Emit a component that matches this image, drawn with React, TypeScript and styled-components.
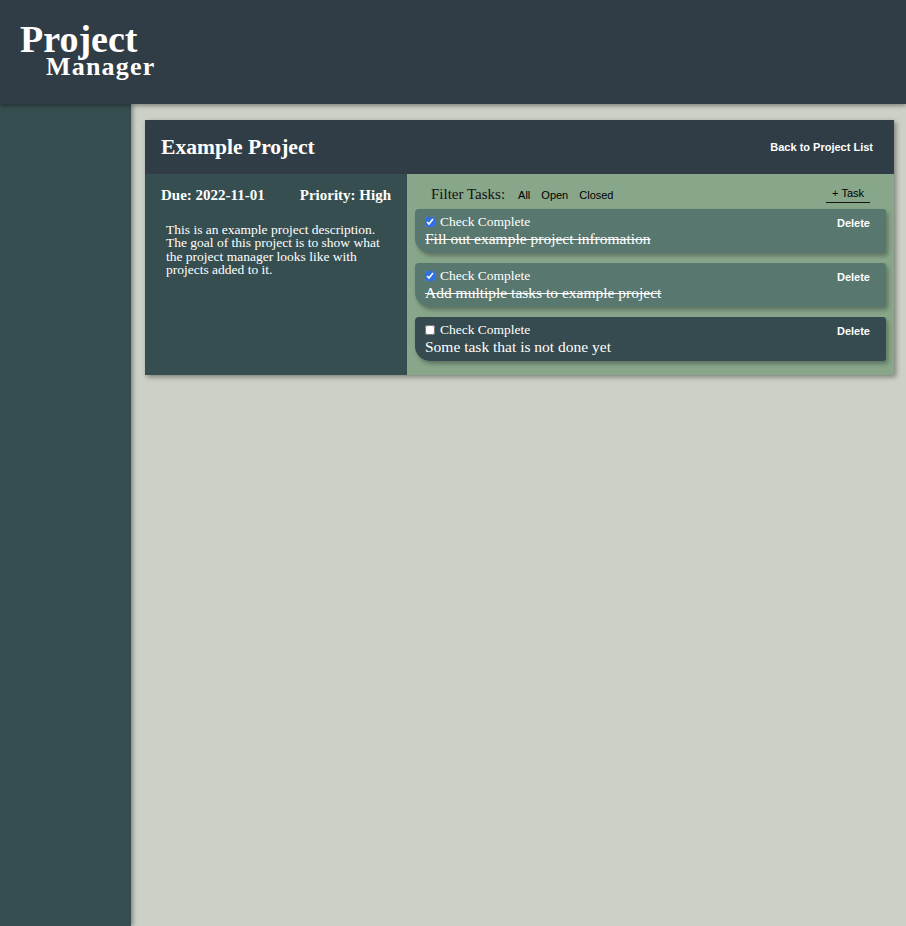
import React, { useState } from "react";
import styled, { createGlobalStyle } from "styled-components";

const GlobalStyle = createGlobalStyle`
  html, body {
    margin: 0;
    padding: 0;
    background: #cbd1c6;
  }
  * {
    box-sizing: border-box;
  }
`;

const serif = `"Liberation Serif", "Times New Roman", serif`;
const sans = `"Liberation Sans", Arial, sans-serif`;

const Layout = styled.div`
  display: grid;
  grid-template-columns: 131px 1fr;
  grid-template-rows: 104px 1fr;
  height: 926px;
  background: #cbd1c6;
`;

const Header = styled.header`
  grid-column: 1 / 3;
  background: #313d46;
  box-shadow: 0 2px 4px rgba(0, 0, 0, 0.35);
  position: relative;
  z-index: 2;
  padding: 21px 0 0 20px;
  color: #fff;
  font-family: ${serif};
`;

const LogoTop = styled.div`
  font-size: 38px;
  font-weight: bold;
  line-height: 36px;
`;

const LogoBottom = styled.div`
  font-size: 26px;
  font-weight: bold;
  letter-spacing: 1.2px;
  line-height: 20px;
  margin-left: 26px;
`;

const Sidebar = styled.aside`
  background: #374e50;
  box-shadow: 2px 0 4px rgba(0, 0, 0, 0.35);
  position: relative;
  z-index: 1;
`;

const Main = styled.main`
  padding: 16px 12px 0 14px;
`;

const Card = styled.section`
  box-shadow: 2px 2px 5px rgba(0, 0, 0, 0.4);
`;

const CardHeader = styled.div`
  height: 54px;
  background: #313d46;
  display: flex;
  align-items: center;
  justify-content: space-between;
  padding: 0 21px 0 16px;
`;

const Title = styled.h1`
  margin: 0;
  color: #fff;
  font-family: ${serif};
  font-size: 21.6px;
  font-weight: bold;
`;

const LinkButton = styled.button`
  background: none;
  border: none;
  padding: 0;
  color: #fff;
  font-family: ${sans};
  font-size: 11px;
  font-weight: bold;
  cursor: pointer;
`;

const Body = styled.div`
  display: grid;
  grid-template-columns: 262px 1fr;
`;

const InfoPanel = styled.div`
  background: #374e50;
  padding: 13px 16px 16px;
  color: #fff;
  font-family: ${serif};
`;

const MetaRow = styled.div`
  display: flex;
  justify-content: space-between;
  font-size: 15px;
  font-weight: bold;
`;

const Description = styled.p`
  margin: 19px 0 0 5px;
  width: 224px;
  font-size: 13.5px;
  line-height: 13.3px;
`;

const TaskPanel = styled.div`
  background: #88a68a;
  padding: 12px 8px 14px;
  display: flex;
  flex-direction: column;
  gap: 10px;
`;

const FilterRow = styled.div`
  display: flex;
  align-items: center;
  padding: 0 16px;
  margin-bottom: -4px;
`;

const FilterLabel = styled.span`
  font-family: ${serif};
  font-size: 15px;
  color: #111;
  margin-right: 13px;
`;

const FilterButton = styled.button`
  background: none;
  border: none;
  padding: 0;
  margin-right: 11px;
  font-family: ${sans};
  font-size: 11px;
  color: #000;
  cursor: pointer;
`;

const AddButton = styled.button`
  margin-left: auto;
  background: none;
  border: none;
  border-bottom: 1px solid #111;
  padding: 0 6px 3px;
  font-family: ${sans};
  font-size: 11px;
  color: #000;
  cursor: pointer;
`;

const TaskCard = styled.div<{ $done: boolean }>`
  background: ${(p) => (p.$done ? "#57776f" : "#364b4f")};
  border-radius: 4px 3px 3px 15px;
  box-shadow: 2px 3px 4px rgba(0, 0, 0, 0.3);
  padding: 5px 16px 5px 10px;
  color: #fff;
  font-family: ${serif};
`;

const TaskTop = styled.div`
  display: flex;
  align-items: center;
  justify-content: space-between;
  height: 15px;
`;

const CheckLabel = styled.label`
  display: flex;
  align-items: center;
  font-size: 13.5px;
`;

const Check = styled.input`
  width: 10px;
  height: 10px;
  margin: 0 5px 0 0;
  accent-color: #2f6fe4;
`;

const DeleteButton = styled(LinkButton)`
  margin-top: 3px;
`;

const TaskText = styled.div<{ $done: boolean }>`
  font-size: 15.5px;
  line-height: 19px;
  text-decoration: ${(p) => (p.$done ? "line-through" : "none")};
`;

const initialTasks = [
  { id: 1, text: "Fill out example project infromation", done: true },
  { id: 2, text: "Add multiple tasks to example project", done: true },
  { id: 3, text: "Some task that is not done yet", done: false },
];

export default function App() {
  const [tasks, setTasks] = useState(initialTasks);

  const toggle = (id: number) =>
    setTasks((t) => t.map((x) => (x.id === id ? { ...x, done: !x.done } : x)));

  return (
    <>
      <GlobalStyle />
      <Layout>
        <Header>
          <LogoTop>Project</LogoTop>
          <LogoBottom>Manager</LogoBottom>
        </Header>
        <Sidebar />
        <Main>
          <Card>
            <CardHeader>
              <Title>Example Project</Title>
              <LinkButton>Back to Project List</LinkButton>
            </CardHeader>
            <Body>
              <InfoPanel>
                <MetaRow>
                  <span>Due: 2022-11-01</span>
                  <span>Priority: High</span>
                </MetaRow>
                <Description>
                  This is an example project description. The goal of this
                  project is to show what the project manager looks like with
                  projects added to it.
                </Description>
              </InfoPanel>
              <TaskPanel>
                <FilterRow>
                  <FilterLabel>Filter Tasks:</FilterLabel>
                  <FilterButton>All</FilterButton>
                  <FilterButton>Open</FilterButton>
                  <FilterButton>Closed</FilterButton>
                  <AddButton>+ Task</AddButton>
                </FilterRow>
                {tasks.map((t) => (
                  <TaskCard key={t.id} $done={t.done}>
                    <TaskTop>
                      <CheckLabel>
                        <Check
                          type="checkbox"
                          checked={t.done}
                          onChange={() => toggle(t.id)}
                        />
                        Check Complete
                      </CheckLabel>
                      <DeleteButton>Delete</DeleteButton>
                    </TaskTop>
                    <TaskText $done={t.done}>{t.text}</TaskText>
                  </TaskCard>
                ))}
              </TaskPanel>
            </Body>
          </Card>
        </Main>
      </Layout>
    </>
  );
}
